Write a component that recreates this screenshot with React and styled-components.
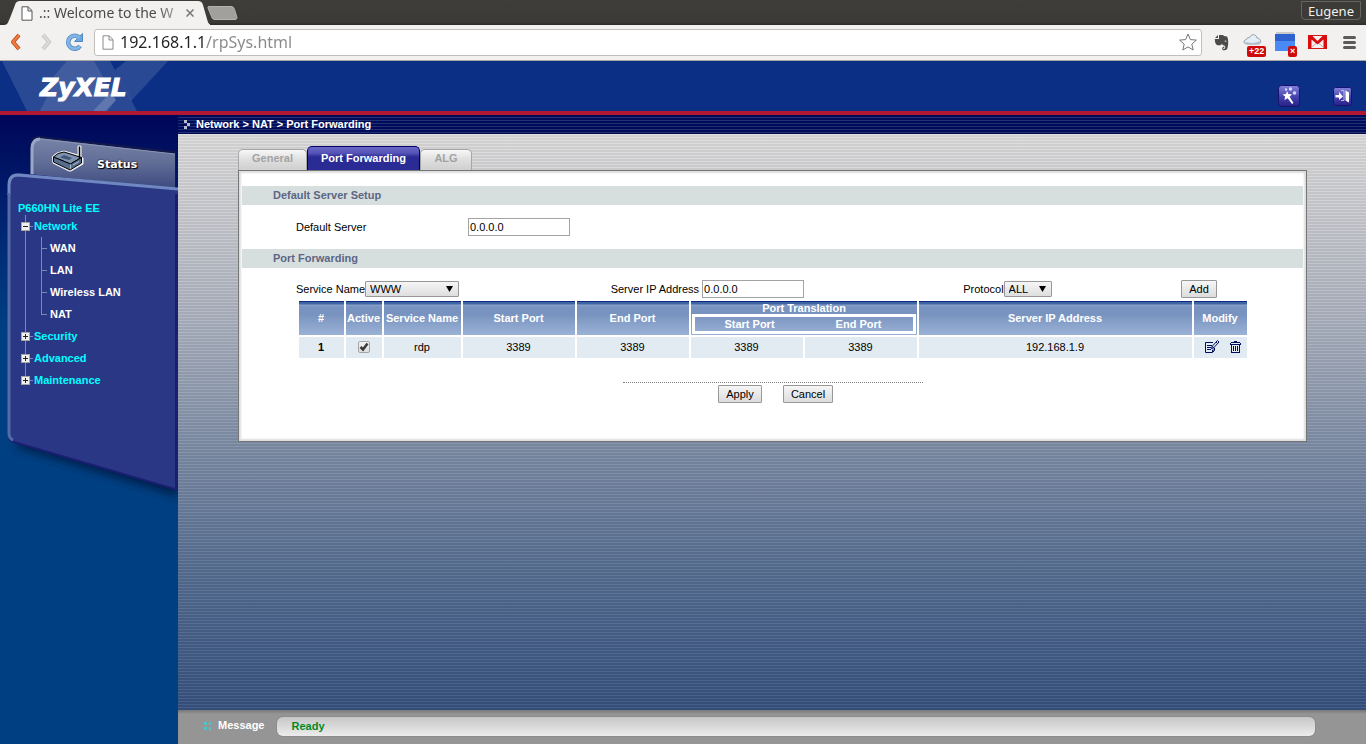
import React from "react";
import styled, { createGlobalStyle } from "styled-components";

const GlobalStyle = createGlobalStyle`
  *, *::before, *::after { box-sizing: border-box; }
  body { margin: 0; font: 11px/14px "Liberation Sans", Arial, sans-serif; color: #000; }
  button, input, select { font: inherit; color: inherit; }
  a { color: inherit; text-decoration: none; }
`;

const Page = styled.div`
  min-height: 100vh;
  display: flex;
  flex-direction: column;
`;

/* ---------- browser frame ---------- */
const TitleBar = styled.div`
  height: 25px;
  display: flex;
  align-items: flex-start;
  background: linear-gradient(#3e3d39, #3b3a36 22px, #2c2b28);
  font: 14px/18px "Noto Sans", "Open Sans", sans-serif;
`;
const BrowserTab = styled.div`
  position: relative;
  width: 200px;
  height: 25px;
  margin-left: 4px;
  padding: 1px 10px 0 17px;
  display: flex;
  align-items: center;
  color: #4a4a4a;
  & > * { position: relative; }
`;
const TabShape = styled.svg`
  && { position: absolute; left: 0; top: 0; }
`;
const TabTitle = styled.span`
  flex: 1;
  margin-left: 6px;
  white-space: nowrap;
  mask-image: linear-gradient(90deg, #000 80%, rgba(0, 0, 0, 0.15) 100%);
`;
const PlainButton = styled.button`
  border: 0;
  padding: 0;
  background: none;
  display: flex;
  align-items: center;
  justify-content: center;
`;
const NewTab = styled(PlainButton)`
  margin: 6px 0 0 3px;
`;
const UserButton = styled.button`
  margin: 1px 5px 0 auto;
  width: 60px;
  height: 19px;
  padding: 0;
  border: 1px solid #66645e;
  border-radius: 0 0 4px 4px;
  background: #3c3b37;
  color: #f2f1f0;
  font: 13px/16px "Noto Sans", "Open Sans", sans-serif;
`;
const Toolbar = styled.div`
  height: 36px;
  padding: 0 7px 1px 6px;
  display: flex;
  align-items: center;
  background: #f2f1f0;
  border-bottom: 1px solid #a9a7a3;
`;
const NavButton = styled(PlainButton)`
  width: 20px;
  height: 24px;
  margin-right: ${(p) => p.$gap}px;
`;
const AddressBar = styled.form`
  flex: 1;
  height: 27px;
  padding: 0 4px 0 7px;
  display: flex;
  align-items: center;
  background: #fff;
  border: 1px solid #c1bfbc;
  border-radius: 3px;
`;
const Address = styled.input`
  flex: 1;
  min-width: 0;
  margin-left: 6px;
  padding: 0;
  border: 0;
  outline: 0;
  font: 16px/24px "Noto Sans", "Open Sans", sans-serif;
  color: transparent;
  background: linear-gradient(90deg, #222 85px, #888 85px);
  background-clip: text;
`;
const Extensions = styled.div`
  margin-left: 9px;
  display: flex;
  align-items: center;
  gap: 12px;
`;
const Extension = styled(PlainButton)`
  position: relative;
  width: 20px;
  height: 24px;
`;
const Badge = styled.span`
  position: absolute;
  left: ${(p) => p.$left}px;
  bottom: -3px;
  padding: 0 2px;
  border-radius: 2px;
  background: #cf0a0a;
  color: #fff;
  font: bold 9px/11px "Liberation Sans", Arial, sans-serif;
`;

/* ---------- router page ---------- */
const Masthead = styled.header`
  position: relative;
  height: 54px;
  padding: 0 14px 0 40px;
  display: flex;
  align-items: center;
  justify-content: space-between;
  background: #0b2f85;
  border-bottom: 4px solid #b01831;
`;
const Rays = styled.svg`
  position: absolute;
  left: 0;
  top: 0;
`;
const Brand = styled.a`
  position: relative;
  padding-top: 4px;
  font: italic bold 25px/28px "DejaVu Sans", sans-serif;
  color: #fff;
  -webkit-text-stroke: 1px #fff;
`;
const HeaderTools = styled.div`
  display: flex;
  align-items: center;
  gap: 33px;
  padding-top: 20px;
`;
const Columns = styled.div`
  flex: 1;
  display: flex;
`;
const Sidebar = styled.aside`
  position: relative;
  width: 178px;
  flex: none;
  background: linear-gradient(#000659, #00307a 150px, #004082 220px);
`;
const SidebarArt = styled.svg`
  position: absolute;
  left: 0;
  top: 0;
`;
const StatusLink = styled.a`
  position: relative;
  display: flex;
  align-items: center;
  gap: 12px;
  margin: 30px 0 0 51px;
  height: 28px;
  color: #fff;
  font: 900 11px/14px "DejaVu Sans", sans-serif;
  text-shadow: 1px 1px 1px #000, 0 0 2px #000;
  & > span { padding-top: 11px; }
`;
const Menu = styled.nav`
  position: relative;
  margin: 28px 0 0 18px;
  font-weight: bold;
  color: #0ff;
`;
const Device = styled.div`
  line-height: 15px;
`;
const Tree = styled.ul`
  position: relative;
  list-style: none;
  margin: 0;
  padding: 0;
  &::before {
    content: "";
    position: absolute;
    left: 7px;
    top: -1px;
    bottom: 10px;
    width: 1px;
    background: #7f86b8;
  }
`;
const Branch = styled.li`
  position: relative;
  padding-left: 3px;
`;
const BranchRow = styled.a`
  display: flex;
  align-items: center;
  height: ${(p) => (p.$first ? 20 : 22)}px;
  &::before {
    content: "";
    order: 1;
    width: 3px;
    height: 1px;
    margin-right: 1px;
    background: #7f86b8;
  }
  & > span { order: 2; }
`;
const Leaves = styled.ul`
  position: relative;
  list-style: none;
  margin: 1px 0 0 20px;
  padding: 0;
  color: #fff;
  &::before {
    content: "";
    position: absolute;
    left: 0;
    top: 0;
    bottom: 11px;
    width: 1px;
    background: #7f86b8;
  }
`;
const Leaf = styled.li`
  display: flex;
  align-items: center;
  height: 22px;
  &::before {
    content: "";
    width: 6px;
    height: 1px;
    margin-right: 3px;
    background: #7f86b8;
  }
`;

const Main = styled.main`
  flex: 1;
  min-width: 0;
  display: flex;
  flex-direction: column;
`;
const Breadcrumb = styled.div`
  height: 19px;
  padding-left: 5px;
  display: flex;
  align-items: center;
  gap: 5px;
  color: #fff;
  font-weight: bold;
  background: repeating-linear-gradient(#000a5a 0 2px, #1f3272 2px 3px);
  border-bottom: 1px solid #00084f;
`;
const Workspace = styled.div`
  flex: 1;
  padding: 12px 59px 24px 60px;
  background:
    repeating-linear-gradient(rgba(255, 255, 255, 0.07) 0 1px, rgba(0, 0, 0, 0.06) 1px 3px),
    linear-gradient(#dedede 0, #cbccd1 14%, #a9b0be 34%, #7b8ba5 56%, #566e92 76%, #36527f 100%);
`;
const Tabs = styled.nav`
  display: flex;
  align-items: flex-end;
  height: 24px;
`;
const Tab = styled.a`
  height: ${(p) => (p.$active ? 24 : 21)}px;
  width: ${(p) => p.$width}px;
  border: 1px solid ${(p) => (p.$active ? "#00006b" : "#a6a6a6")};
  border-bottom: 0;
  border-radius: 5px 5px 0 0;
  text-align: center;
  font-weight: bold;
  line-height: ${(p) => (p.$active ? 22 : 16)}px;
  color: ${(p) => (p.$active ? "#fff" : "#a3a3a3")};
  background: ${(p) =>
    p.$active
      ? "linear-gradient(#6b69c4 0, #5654b8 6px, #2b2b95 10px, #2b2b95)"
      : "linear-gradient(#f8f8f8, #e2e2e2 8px, #cfcfcf)"};
`;
const Panel = styled.section`
  background: #fff;
  border: 1px solid #767676;
  box-shadow: inset 0 2px 2px #ddd, inset 3px 0 2px -1px #ddd, inset -3px -3px 2px -1px #ddd;
  padding: 15px 3px 38px;
`;
const SectionTitle = styled.h2`
  margin: 0;
  height: 19px;
  padding-left: 31px;
  background: #d7dfde;
  color: #5c6684;
  font: bold 11px/19px "Liberation Sans", Arial, sans-serif;
`;
const DefaultServer = styled.div`
  display: grid;
  grid-template-columns: 172px auto;
  justify-content: start;
  align-items: center;
  height: 44px;
  padding-left: 54px;
`;
const TextInput = styled.input`
  width: 102px;
  height: 18px;
  padding: 0 1px;
  border: 1px solid #a3a3a3;
  background: #fff;
`;
const Button = styled.button`
  width: ${(p) => p.$width}px;
  height: 18px;
  padding: 0;
  border: 1px solid #989898;
  border-radius: 1px;
  background: linear-gradient(#f6f6f6, #dcdcdc);
  line-height: 14px;
`;
const FormRow = styled.div`
  display: grid;
  grid-template-columns: 315fr 353fr 218fr auto;
  align-items: center;
  margin: 12px 86px 2px 54px;
`;
const Field = styled.div`
  display: flex;
  align-items: center;
  gap: ${(p) => p.$gap || 0}px;
  white-space: nowrap;
`;
const SelectBox = styled.span`
  position: relative;
  display: flex;
  & > svg { position: absolute; right: 6px; top: 5px; pointer-events: none; }
`;
const Select = styled.select`
  appearance: none;
  width: ${(p) => p.$width}px;
  height: 16px;
  padding: 0 4px;
  border: 1px solid #989898;
  border-radius: 1px;
  background: linear-gradient(#f6f6f6, #dedede);
  line-height: 14px;
`;
const TableArea = styled.div`
  padding: 0 54px 0 55px;
`;
const Table = styled.table`
  width: 100%;
  table-layout: fixed;
  border-collapse: separate;
  border-spacing: 2px;
  margin-top: -1px;
  text-align: center;
`;
const Head = styled.th`
  height: 34px;
  padding: 0 1px 1px 0;
  color: #fff;
  white-space: nowrap;
  border-top: 1px solid #0a2a80;
  background: linear-gradient(#3f64a5 0 2px, #88a1c8 3px, #7893bf 5px, #7893bf 12px, #9bb2d6);
`;
const Cell = styled.td`
  height: 21px;
  padding: 0 1px 1px 0;
  background: #e3ebf2;
  font-weight: ${(p) => (p.$bold ? "bold" : "normal")};
`;
const Translation = styled.div`
  padding: 0 0 0 1px;
  line-height: 12px;
`;
const TranslationPorts = styled.div`
  display: grid;
  grid-template-columns: 1fr 1fr;
  border: 3px solid #fff;
  height: 20px;
  line-height: 14px;
`;
const CheckHolder = styled.label`
  position: relative;
  display: block;
  width: 12px;
  height: 12px;
  margin: 0 auto;
  & > svg { position: absolute; left: 1px; top: 0; pointer-events: none; }
`;
const Check = styled.input`
  appearance: none;
  display: block;
  width: 12px;
  height: 12px;
  margin: 0;
  border: 1px solid #a5a5a5;
  border-radius: 2px;
  background: linear-gradient(#f2f2f2, #dedede);
`;
const RowTools = styled.div`
  display: flex;
  align-items: center;
  justify-content: center;
  gap: 10px;
  padding-left: 5px;
`;
const Actions = styled.div`
  width: 300px;
  margin: 22px auto 0;
  border-top: 1px dotted #808080;
  padding: 2px 0 0 6px;
  display: flex;
  justify-content: center;
  gap: 21px;
`;
const MessageBar = styled.footer`
  height: 34px;
  padding: 0 51px 1px 26px;
  display: flex;
  align-items: center;
  background: linear-gradient(#777 0, #959595 4px);
  color: #fff;
  font-weight: bold;
  & > svg { margin-bottom: 2px; }
`;
const MessageLabel = styled.span`
  margin: 0 13px 3px 7px;
`;
const MessageText = styled.output`
  flex: 1;
  height: 19px;
  padding-left: 14px;
  border-radius: 6px;
  background: linear-gradient(#c6c6c6, #ececec);
  box-shadow: 0 0 0 1px #8c8c90;
  color: #008a26;
  line-height: 19px;
`;

/* ---------- drawings ---------- */
const PageIcon = ({ color = "#777" }) => (
  <svg width="12" height="15" viewBox="0 0 12 15" fill="#fff" stroke={color}>
    <path d="M1 .8h6.2L11 4.6v9.6H1zM7 1v4h4" />
  </svg>
);
const Arrow = () => (
  <svg width="7" height="6" viewBox="0 0 7 6">
    <path d="M0 0h7L3.5 6z" />
  </svg>
);
const Toggle = ({ open }) => (
  <svg width="9" height="9" viewBox="0 0 9 9" shapeRendering="crispEdges">
    <path fill="#f0f0ee" stroke="#a9a59a" d="M.5.5h8v8h-8z" />
    <path fill="#222" d="M2 4h5v1H2z" />
    {!open && <path fill="#222" d="M4 2h1v5H4z" />}
  </svg>
);
const RouterIcon = () => (
  <svg width="34" height="28" viewBox="0 0 34 28">
    <path d="M1.500 11.500 6 8l7-2 14 4V1h3v11l2 1v6l-12 7h-2L2 18z" fill="#f2f2f2" stroke="#f2f2f2" strokeLinejoin="round" />
    <path d="M2.500 12 7 8.500l6-1.500 17.500 5.500-11 6.500z" fill="#7d93b0" stroke="#000" />
    <path d="M2.500 12v5L19 25l11.500-7v-5.500l-11 6.500z" fill="#566d8e" stroke="#000" />
    <path d="M9 12.500 13 10l8 3-3 2z" fill="#425774" />
    <path d="M28.500 1.500v12" stroke="#000" strokeWidth="1.500" />
    <path d="M19.500 19.500V24M22 20l6-3.500" stroke="#a8bacb" />
  </svg>
);
const WandIcon = () => (
  <svg width="22" height="22" viewBox="0 0 22 22">
    <defs>
      <linearGradient id="violet" x2="0" y2="1">
        <stop stopColor="#8482d8" />
        <stop offset=".55" stopColor="#4541ad" />
        <stop offset="1" stopColor="#272187" />
      </linearGradient>
    </defs>
    <rect x=".5" y=".5" width="21" height="21" rx="3" fill="url(#violet)" stroke="#18126e" />
    <path d="m9 6 1.400 3 3.600.2-2.400 2.600 3.900 6.200-1.500 1-4.300-5.700-3.200 1.700.6-3.500L4.500 9.500l3.500-.5z" fill="#fff" />
    <g fill="#d5d6ff">
      <circle cx="8" cy="4.500" r="1.200" />
      <circle cx="12.500" cy="4" r="1.700" />
      <circle cx="16.500" cy="8" r="1.800" />
    </g>
  </svg>
);
const ExitIcon = () => (
  <svg width="19" height="19" viewBox="0 0 19 19">
    <rect x=".5" y=".5" width="18" height="18" rx="2" fill="url(#violet)" stroke="#18126e" />
    <path d="M2.500 8H6V5l4 4.500L6 13v-2.500H2.500z" fill="#fff" />
    <path d="M8 3.500h3v10H8" fill="none" stroke="#b9b9ee" />
    <path d="m12.500 3.500 3.500 2v10l-3.500-2z" fill="#fff" />
  </svg>
);
const EditIcon = () => (
  <svg width="16" height="14" viewBox="0 0 16 14" fill="none" stroke="#000e5c">
    <path d="M9 2.500H1.500v10h7l2-2V8M3 5.500h5M3 7.500h4M3 9.500h4M8.500 12v-2h2" />
    <path d="m7.500 8.500.5-2 5.500-6 1.500 1.500-5.500 6zM8 6.500l2 1.500M12 2l1.500 1.500" />
  </svg>
);
const TrashIcon = () => (
  <svg width="11" height="13" viewBox="0 0 11 13" fill="#000e5c" shapeRendering="crispEdges">
    <path d="M4 0h3v1H4zM1 1h9v1H1zM0 2h1v1H0zM10 2h1v1h-1zM0 3h11v1H0zM1 4h1v8H1zM9 4h1v8H9zM1 11h9v1H1zM3 5h1v5H3zM5 5h1v5H5zM7 5h1v5H7z" />
  </svg>
);

const branches = [
  { name: "Network", leaves: ["WAN", "LAN", "Wireless LAN", "NAT"] },
  { name: "Security" },
  { name: "Advanced" },
  { name: "Maintenance" },
];

const BrowserFrame = () => (
  <>
    <TitleBar>
      <BrowserTab>
        <TabShape width="206" height="25" viewBox="0 0 206 25">
          <path d="M0 25c4 0 4-3 6-7l5-13c1-3 2-4 6-4h176c4 0 5 1 6 4l4 14c1 4 2 6 6 6z" fill="#f2f1f0" />
        </TabShape>
        <PageIcon color="#555" />
        <TabTitle>.:: Welcome to the W</TabTitle>
        <PlainButton aria-label="Close tab">
          <svg width="8" height="8" viewBox="0 0 8 8" stroke="#777" strokeWidth="1.500">
            <path d="m.5.5 7 7m0-7-7 7" />
          </svg>
        </PlainButton>
      </BrowserTab>
      <NewTab aria-label="New tab">
        <svg width="31" height="14" viewBox="0 0 31 14">
          <path d="M2 .5h22c2 0 3 1 3.500 3l2.500 8c0 1-.5 2-2 2H8c-2 0-3-1-3.500-3L1 2C.7 1 1 .5 2 .5z" fill="#a2a09c" stroke="#b5b3af" />
        </svg>
      </NewTab>
      <UserButton>Eugene</UserButton>
    </TitleBar>
    <Toolbar>
      <NavButton $gap={10} aria-label="Back">
        <svg width="12" height="18" viewBox="0 0 12 18" fill="none" strokeLinejoin="round">
          <path d="m9 2-6 7 6 7" stroke="#b8481c" strokeWidth="4" />
          <path d="m9 2-6 7 6 7" stroke="#f07a3c" strokeWidth="2.500" />
        </svg>
      </NavButton>
      <NavButton $gap={8} aria-label="Forward">
        <svg width="12" height="18" viewBox="0 0 12 18" fill="none">
          <path d="m3 2 6 7-6 7" stroke="#c9c7c4" strokeWidth="4" />
          <path d="m3 2 6 7-6 7" stroke="#dcdad8" strokeWidth="2" />
        </svg>
      </NavButton>
      <NavButton $gap={10} aria-label="Reload">
        <svg width="19" height="20" viewBox="0 0 19 20" fill="none">
          <path d="M15 14a6.500 6.500 0 1 1-.5-8" stroke="#4f88c2" strokeWidth="4.500" />
          <path d="M17.500 1.500v8h-8z" fill="#6aa5dd" stroke="#4f88c2" />
          <path d="M15 14a6.500 6.500 0 1 1-.5-8" stroke="#80b5e6" strokeWidth="3" />
        </svg>
      </NavButton>
      <AddressBar onSubmit={(e) => e.preventDefault()}>
        <PageIcon color="#8a8a8a" />
        <Address aria-label="Address" defaultValue="192.168.1.1/rpSys.html" spellCheck={false} />
        <PlainButton type="button" aria-label="Bookmark">
          <svg width="18" height="18" viewBox="0 0 18 18" fill="#fff" stroke="#777">
            <path d="m9 1 2.400 5.600 6 .5-4.600 4 1.400 5.900L9 13.900 3.800 17l1.400-5.900-4.600-4 6-.5z" />
          </svg>
        </PlainButton>
      </AddressBar>
      <Extensions>
        <Extension aria-label="Evernote">
          <svg width="15" height="17" viewBox="0 0 15 17" fill="#4b4b4b">
            <path d="M4 1v3H1zM5 1h4l1 1 3 .6c1.500 2.500 1.600 8 .5 11.500-.5 1.700-1.700 2.400-4 2.200-1.500-.2-1.900-3.300 0-3.600l.8.1v1.100h-.7c-.6.3-.4 1 .2 1 2 0 1.900-2.900.3-3.400-1.200-.4-2-1-2.300-2.100-.4 2.600-3.200 1.900-4.900 1.500C1.300 9.900.8 7.500.8 5H5z" />
            <path d="M10.500 7.500c.3-1.400 1.800-1.200 2 .3z" fill="#f2f1f0" />
          </svg>
        </Extension>
        <Extension aria-label="Weather, 22 degrees">
          <svg width="20" height="20" viewBox="0 0 20 20">
            <path d="M3.500 12C0 11.500.2 8 3.500 7.500 4 5.500 5.500 5.300 6.500 5.700 8 1.500 13.500 2 14 6c4 .2 5 5.500 1.500 6z" fill="#e4eef4" stroke="#8d9fac" />
            <path d="M2 9.500c4 2 11 2 15-.5l-1 2.500H3z" fill="#aac0cd" />
          </svg>
          <Badge $left={4}>+22</Badge>
        </Extension>
        <Extension aria-label="Calendar">
          <svg width="20" height="20" viewBox="0 0 20 20">
            <path fill="#c9c9c9" d="M1 0h18v4H1z" />
            <path fill="#2d62cf" d="M0 2h20v8H0z" />
            <path fill="#4a8af4" d="M0 9h20v10H0z" />
          </svg>
          <Badge $left={13}>×</Badge>
        </Extension>
        <Extension aria-label="Gmail">
          <svg width="19" height="14" viewBox="0 0 19 14">
            <path fill="#f5f1f0" stroke="#d01a1a" d="M.5.500h18v13H.5z" />
            <path fill="none" stroke="#d8a5a2" d="m4 12 5.500-5 5.500 5" />
            <path fill="#d90d0d" d="M0 0h3.500l6 6 6-6H19v14h-3.500V4.500l-6 5-6-5V14H0z" />
          </svg>
        </Extension>
        <Extension aria-label="Menu">
          <svg width="13" height="13" viewBox="0 0 13 13" stroke="#5b5b5b" strokeWidth="3" strokeLinecap="round">
            <path d="M1.500 1.500h10M1.500 6.500h10M1.500 11.500h10" />
          </svg>
        </Extension>
      </Extensions>
    </Toolbar>
  </>
);

const SidebarShapes = () => (
  <SidebarArt width="178" height="400" viewBox="0 0 178 400" aria-hidden="true">
    <defs>
      <linearGradient id="statusTab" x2="0" y2="1">
        <stop stopColor="#7883a8" />
        <stop offset=".5" stopColor="#616d96" />
        <stop offset="1" stopColor="#3c4a80" />
      </linearGradient>
      <filter id="soft" x="-10%" y="-10%" width="120%" height="120%">
        <feGaussianBlur stdDeviation="4" />
      </filter>
    </defs>
    <path d="M30 66V31c0-6 3-10 9-10l137 15v37z" fill="#11184d" />
    <path d="M31 66V32c0-5 3-9 8-9l136 16v34z" fill="url(#statusTab)" />
    <path d="M32 60V33c0-5 3-9 8-9" fill="none" stroke="#9ba7c9" strokeWidth="3" />
    <path d="M40 24l135 15" fill="none" stroke="#8b96b6" />
    <path d="M14 332l164 50v-20L30 315z" fill="#00204f" filter="url(#soft)" />
    <path d="M8 322V69c0-7 3-11 10-11l160 16v302L14 328c-4-1-6-3-6-6z" fill="#1b1f72" />
    <path d="M8 318V69c0-7 3-11 10-11l160 16v5h-3v294L14 326c-4-1-6-4-6-8z" fill="#2a3785" />
    <path d="M9 80V70c0-7 3-10 9-10l160 14" fill="none" stroke="#6f88c2" strokeWidth="3" />
    <path d="M9 78v240c0 3 1 6 4 7" fill="none" stroke="#546ba6" strokeWidth="3" />
  </SidebarArt>
);

const SideNavigation = () => (
  <Sidebar>
    <SidebarShapes />
    <StatusLink href="#status">
      <RouterIcon />
      <span>Status</span>
    </StatusLink>
    <Menu>
      <Device>P660HN Lite EE</Device>
      <Tree>
        {branches.map((b, i) => (
          <Branch key={b.name}>
            <BranchRow href={`#${b.name}`} $first={i === 0}>
              <Toggle open={!!b.leaves} />
              <span>{b.name}</span>
            </BranchRow>
            {b.leaves && (
              <Leaves>
                {b.leaves.map((l) => (
                  <Leaf key={l}>
                    <a href={`#${l}`}>{l}</a>
                  </Leaf>
                ))}
              </Leaves>
            )}
          </Branch>
        ))}
      </Tree>
    </Menu>
  </Sidebar>
);

const RulesTable = () => (
  <Table>
    <colgroup>
      <col style={{ width: 45 }} />
      <col style={{ width: 36 }} />
      <col style={{ width: 77 }} />
      <col style={{ width: 112 }} />
      <col style={{ width: 112 }} />
      <col style={{ width: 112 }} />
      <col style={{ width: 112 }} />
      <col />
      <col style={{ width: 53 }} />
    </colgroup>
    <thead>
      <tr>
        <Head>#</Head>
        <Head>Active</Head>
        <Head>Service Name</Head>
        <Head>Start Port</Head>
        <Head>End Port</Head>
        <Head colSpan={2}>
          <Translation>
            Port Translation
            <TranslationPorts>
              <span>Start Port</span>
              <span>End Port</span>
            </TranslationPorts>
          </Translation>
        </Head>
        <Head>Server IP Address</Head>
        <Head>Modify</Head>
      </tr>
    </thead>
    <tbody>
      <tr>
        <Cell $bold>1</Cell>
        <Cell>
          <CheckHolder>
            <Check type="checkbox" defaultChecked aria-label="Rule active" />
            <svg width="11" height="11" viewBox="0 0 11 11" fill="none" stroke="#3a3a3a" strokeWidth="2.500">
              <path d="m1.500 6 2.500 2.500 4.500-6" />
            </svg>
          </CheckHolder>
        </Cell>
        <Cell>rdp</Cell>
        <Cell>3389</Cell>
        <Cell>3389</Cell>
        <Cell>3389</Cell>
        <Cell>3389</Cell>
        <Cell>192.168.1.9</Cell>
        <Cell>
          <RowTools>
            <PlainButton aria-label="Edit rule"><EditIcon /></PlainButton>
            <PlainButton aria-label="Delete rule"><TrashIcon /></PlainButton>
          </RowTools>
        </Cell>
      </tr>
    </tbody>
  </Table>
);

export default function App() {
  return (
    <Page>
      <GlobalStyle />
      <BrowserFrame />
      <Masthead>
        <Rays width="170" height="50" viewBox="0 0 170 50" fill="#fff" aria-hidden="true">
          <path d="M2 0h108l27 50H27z" fillOpacity=".13" />
          <path d="M67 0h27l22 39-11 11H40l12-24-3-5z" fillOpacity=".11" />
          <path d="M126 0h42l-37 40L115 9z" fillOpacity=".13" />
          <path d="M93 50l17-18 6 7-9 11z" fillOpacity=".16" />
        </Rays>
        <Brand href="#home">ZyXEL</Brand>
        <HeaderTools>
          <PlainButton aria-label="Wizard"><WandIcon /></PlainButton>
          <PlainButton aria-label="Log out"><ExitIcon /></PlainButton>
        </HeaderTools>
      </Masthead>
      <Columns>
        <SideNavigation />
        <Main>
          <Breadcrumb>
            <svg width="8" height="9" viewBox="0 0 8 9" fill="#b9bdca">
              <path d="M1 0h3v3H1zM4 3h3v3H4zM1 6h3v3H1z" />
            </svg>
            Network &gt; NAT &gt; Port Forwarding
          </Breadcrumb>
          <Workspace>
            <Tabs>
              <Tab href="#general" $width={69}>General</Tab>
              <Tab href="#forwarding" $width={113} $active>Port Forwarding</Tab>
              <Tab href="#alg" $width={52}>ALG</Tab>
            </Tabs>
            <Panel>
              <SectionTitle>Default Server Setup</SectionTitle>
              <DefaultServer>
                <label htmlFor="default-server">Default Server</label>
                <TextInput id="default-server" defaultValue="0.0.0.0" />
              </DefaultServer>
              <SectionTitle>Port Forwarding</SectionTitle>
              <FormRow>
                <Field>
                  <label htmlFor="service">Service Name</label>
                  <SelectBox>
                    <Select id="service" $width={94}><option>WWW</option></Select>
                    <Arrow />
                  </SelectBox>
                </Field>
                <Field $gap={3}>
                  <label htmlFor="server-ip">Server IP Address</label>
                  <TextInput id="server-ip" defaultValue="0.0.0.0" />
                </Field>
                <Field>
                  <label htmlFor="protocol">Protocol</label>
                  <SelectBox>
                    <Select id="protocol" $width={48}><option>ALL</option></Select>
                    <Arrow />
                  </SelectBox>
                </Field>
                <Button $width={36}>Add</Button>
              </FormRow>
              <TableArea>
                <RulesTable />
              </TableArea>
              <Actions>
                <Button $width={44}>Apply</Button>
                <Button $width={50}>Cancel</Button>
              </Actions>
            </Panel>
          </Workspace>
          <MessageBar>
            <svg width="7" height="8" viewBox="0 0 7 8" fill="#4fc4c4" shapeRendering="crispEdges">
              <path d="M0 0h3v3H0zM5 0h3v3H5zM0 5h3v3H0zM5 5h3v3H5z" />
            </svg>
            <MessageLabel>Message</MessageLabel>
            <MessageText>Ready</MessageText>
          </MessageBar>
        </Main>
      </Columns>
    </Page>
  );
}
